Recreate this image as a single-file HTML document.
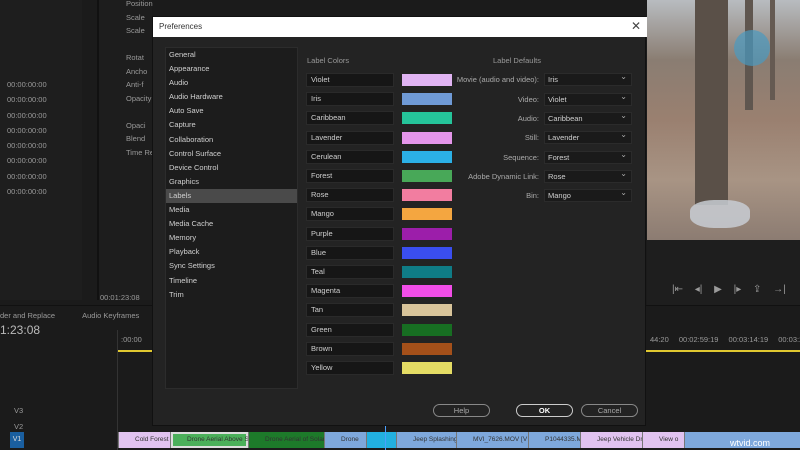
<!DOCTYPE html>
<html><head><meta charset="utf-8"><style>
*{margin:0;padding:0;box-sizing:border-box}
body{width:800px;height:450px;overflow:hidden;background:#1b1b1b;font-family:"Liberation Sans",sans-serif;font-size:8px;color:#c8c8c8;position:relative}
.a{position:absolute}
.tc{color:#9a9a9a;font-size:7.5px;white-space:nowrap}
.dlg{left:152px;top:16px;width:494px;height:410px;background:#232323;border:1px solid #111}
.title{left:0;top:0;width:494px;height:20px;background:#fff;color:#333;font-size:8px;padding:5px 6px}
.list{left:12px;top:30px;width:133px;height:342px;background:#1c1c1c;border:1px solid #2c2c2c}
.list div{height:14.1px;line-height:14px;padding-left:3px;color:#d0d0d0;font-size:7.5px}
.list .sel{background:#4a4a4a}
.nm{width:88px;height:14px;background:#161616;border:1px solid #2a2a2a;color:#cfcfcf;font-size:7.5px;line-height:12px;padding-left:4px}
.sw{width:50px;height:12px}
.lbl{width:118px;text-align:right;color:#aaa;font-size:7.5px;white-space:nowrap}
.dd{width:88px;height:13px;background:#1a1a1a;border:1px solid #2b2b2b;color:#d0d0d0;font-size:7.5px;line-height:11px;padding-left:3px}
.dd:after{content:"⌄";position:absolute;right:4px;top:-3px;color:#aaa;font-size:8px}
.btn{height:13px;width:57px;border:1px solid #888;border-radius:7px;text-align:center;font-size:7.5px;line-height:11px;color:#aaa}
.clip{top:432px;height:16px;font-size:6.5px;color:#333;line-height:16px;padding-left:16px;white-space:nowrap;overflow:hidden;border-left:1px solid #777}
</style></head><body>
<div class="a" style="left:0;top:0;width:82px;height:300px;background:#1e1e1e"></div>
<div class="a" style="left:97px;top:0;width:55px;height:300px;background:#1d1d1d;border-left:2px solid #111"></div>
<div class="a tc" style="left:7px;top:77px;line-height:15.3px">00:00:00:00<br>00:00:00:00<br>00:00:00:00<br>00:00:00:00<br>00:00:00:00<br>00:00:00:00<br>00:00:00:00<br>00:00:00:00</div>
<div class="a tc" style="left:126px;top:-3px;line-height:13.5px">Position<br>Scale<br>Scale<br><br>Rotat<br>Ancho<br>Anti-f<br>Opacity<br><br>Opaci<br>Blend<br>Time Re</div>
<div class="a tc" style="left:100px;top:293px">00:01:23:08</div>
<div class="a" style="left:0;top:305px;width:800px;height:1px;background:#111"></div>
<div class="a tc" style="left:0;top:311px">der and Replace &nbsp;&nbsp;&nbsp;&nbsp;&nbsp;&nbsp;&nbsp;&nbsp;&nbsp;&nbsp;&nbsp;&nbsp;Audio Keyframes</div>
<div class="a" style="left:0;top:323px;font-size:12px;color:#bbb">1:23:08</div>
<div class="a tc" style="left:121px;top:335px">:00:00</div>
<div class="a tc" style="left:650px;top:335px;word-spacing:8px">44:20 00:02:59:19 00:03:14:19 00:03:29</div>
<div class="a" style="left:118px;top:350px;width:36px;height:2px;background:#e0c830"></div>
<div class="a" style="left:646px;top:350px;width:154px;height:2px;background:#e0c830"></div>
<div class="a" style="left:117px;top:330px;width:1px;height:120px;background:#333"></div>
<div class="a tc" style="left:14px;top:403px;line-height:16px">V3<br>V2</div>
<div class="a" style="left:10px;top:432px;width:14px;height:16px;background:#1a5fa0;color:#ddd;font-size:7px;line-height:16px;text-align:center">V1</div>
<div class="a clip" style="left:118px;width:52px;background:#e1c3f0">Cold Forest</div>
<div class="a clip" style="left:170px;width:78px;background:#4bb05a;box-shadow:inset 0 0 0 2px #ddd">Drone Aerial Above S</div>
<div class="a clip" style="left:248px;width:76px;background:#1d7a2a">Drone Aerial of Solar</div>
<div class="a clip" style="left:324px;width:42px;background:#7ea8dc">Drone</div>
<div class="a clip" style="left:366px;width:30px;background:#22b0e0"></div>
<div class="a clip" style="left:396px;width:60px;background:#7ea8dc">Jeep Splashing</div>
<div class="a clip" style="left:456px;width:72px;background:#7ea8dc">MVI_7626.MOV [V</div>
<div class="a clip" style="left:528px;width:52px;background:#7ea8dc">P1044335.M</div>
<div class="a clip" style="left:580px;width:62px;background:#e1c3f0">Jeep Vehicle Driv</div>
<div class="a clip" style="left:642px;width:42px;background:#e1c3f0">View o</div>
<div class="a clip" style="left:684px;width:116px;background:#7ea8dc"></div>
<div class="a" style="left:385px;top:425px;width:1px;height:25px;background:#4aa0ff"></div>
<div class="a" style="left:730px;top:438px;color:#fff;font-size:9px">wtvid.com</div>
<!-- video -->
<div class="a" style="left:647px;top:0;width:153px;height:240px;background:linear-gradient(180deg,#b8bcc0 0%,#8a7d72 25%,#9a8070 50%,#a89484 75%,#8c7c72 100%)"></div>
<div class="a" style="left:695px;top:0;width:33px;height:205px;background:#5a5048"></div>
<div class="a" style="left:745px;top:0;width:8px;height:110px;background:#5f564f"></div>
<div class="a" style="left:770px;top:0;width:5px;height:100px;background:#655a52"></div>
<div class="a" style="left:734px;top:30px;width:36px;height:36px;border-radius:50%;background:#4a9ac0;opacity:.7"></div>
<div class="a" style="left:690px;top:200px;width:60px;height:28px;background:#c8ccd4;border-radius:40%;opacity:.85"></div>
<div class="a" style="left:647px;top:240px;width:153px;height:65px;background:#1e1e1e"></div>
<div class="a tc" style="left:672px;top:284px;font-size:10px;word-spacing:9px">|⇤ ◂| ▶ |▸ ⇪ →|</div>
<!-- dialog -->
<div class="a dlg">
<div class="a title">Preferences<span style="position:absolute;right:6px;top:2px;font-size:12px;color:#444">✕</span></div>
<div class="a list">
<div>General</div><div>Appearance</div><div>Audio</div><div>Audio Hardware</div><div>Auto Save</div><div>Capture</div><div>Collaboration</div><div>Control Surface</div><div>Device Control</div><div>Graphics</div><div class="sel">Labels</div><div>Media</div><div>Media Cache</div><div>Memory</div><div>Playback</div><div>Sync Settings</div><div>Timeline</div><div>Trim</div>
</div>
<div class="a" style="left:154px;top:39px;color:#999;font-size:7.5px">Label Colors</div>
<div class="a" style="left:340px;top:39px;color:#999;font-size:7.5px">Label Defaults</div>
<div id="rows"></div>
<div class="a lbl" style="left:268px;top:58px">Movie (audio and video):</div>
<div class="a dd" style="left:391px;top:56px">Iris</div>
<div class="a lbl" style="left:268px;top:78px">Video:</div>
<div class="a dd" style="left:391px;top:76px">Violet</div>
<div class="a lbl" style="left:268px;top:97px">Audio:</div>
<div class="a dd" style="left:391px;top:95px">Caribbean</div>
<div class="a lbl" style="left:268px;top:116px">Still:</div>
<div class="a dd" style="left:391px;top:114px">Lavender</div>
<div class="a lbl" style="left:268px;top:136px">Sequence:</div>
<div class="a dd" style="left:391px;top:134px">Forest</div>
<div class="a lbl" style="left:268px;top:155px">Adobe Dynamic Link:</div>
<div class="a dd" style="left:391px;top:153px">Rose</div>
<div class="a lbl" style="left:268px;top:174px">Bin:</div>
<div class="a dd" style="left:391px;top:172px">Mango</div>
<div class="a btn" style="left:280px;top:387px">Help</div>
<div class="a btn" style="left:363px;top:387px;color:#fff;border-color:#ccc;font-weight:bold">OK</div>
<div class="a btn" style="left:428px;top:387px">Cancel</div>
</div>
<script>
var n=["Violet","Iris","Caribbean","Lavender","Cerulean","Forest","Rose","Mango","Purple","Blue","Teal","Magenta","Tan","Green","Brown","Yellow"];
var c=["#e0b3f2","#6f9ad6","#25c49a","#e495ea","#2bb0e6","#48a858","#f27da0","#f4a640","#9c1eaa","#3a4ef0","#0f7c86","#f24de8","#d8c49a","#176e22","#a4501a","#e4dc64"];
var h="";for(var i=0;i<16;i++){var y=56+i*19.2;h+='<div class="a nm" style="left:153px;top:'+y+'px">'+n[i]+'</div><div class="a sw" style="left:249px;top:'+(y+1)+'px;background:'+c[i]+'"></div>';}
document.getElementById("rows").innerHTML=h;
</script>
</body></html>
